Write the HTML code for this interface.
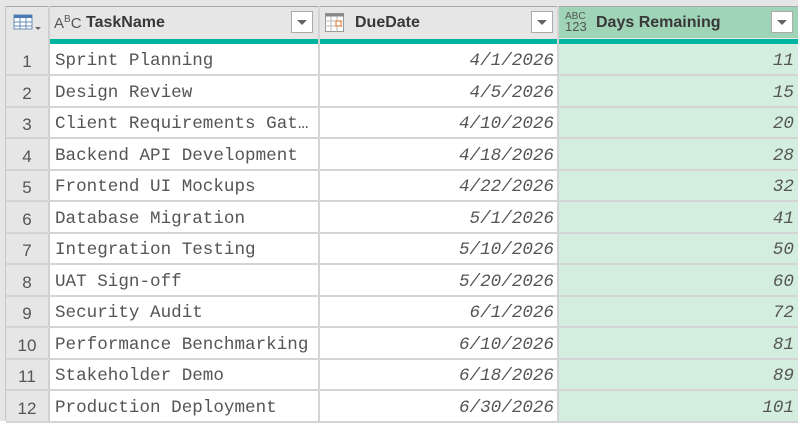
<!DOCTYPE html><html><head><style>
body{margin:0;width:798px;height:421px;overflow:hidden;background:#fff;font-family:"Liberation Sans",sans-serif;position:relative}
.a{position:absolute;box-sizing:border-box}
.h{font-weight:bold;font-size:16px;color:#383838;top:8px;height:30px;line-height:30px}
.m{font-family:"Liberation Mono",monospace;font-size:17.6px;color:#555}
.dd{width:22px;height:22px;background:#fff;border:1px solid #aaa;top:11px}
.dd:after{content:"";position:absolute;left:5px;top:8px;border-left:5px solid transparent;border-right:5px solid transparent;border-top:5px solid #666}
</style></head><body>
<div class="a" style="left:0;top:0;width:798px;height:38px;background:#e6e6e6"></div>
<div class="a" style="left:5px;top:6px;width:793px;height:1px;background:#a8a8a8"></div>
<div class="a" style="left:559px;top:7px;width:239px;height:31px;background:#9fd4b6"></div>
<div class="a" style="left:0;top:38px;width:798px;height:6px;background:#e6e6e6"></div>
<div class="a" style="left:49px;top:39px;width:749px;height:5px;background:#00b4a0"></div>
<div class="a" style="left:0;top:44px;width:49px;height:377px;background:#e6e6e6"></div>
<div class="a" style="left:559px;top:44px;width:239px;height:377px;background:#d3eedf"></div>
<div class="a" style="left:5px;top:6px;width:1px;height:415px;background:#c8c8c8"></div>
<div class="a" style="left:48px;top:6px;width:2px;height:415px;background:#d0d0d0"></div>
<div class="a" style="left:318px;top:6px;width:2px;height:415px;background:#d4d4d4"></div>
<div class="a" style="left:557px;top:6px;width:2px;height:415px;background:#d4d4d4"></div>
<svg class="a" style="left:13px;top:14px" width="32" height="20"><rect x="1" y="1" width="18" height="14" fill="#fff" stroke="#6a8cb8"/><rect x="1" y="1" width="18" height="3" fill="#4a78b5"/><path d="M1 8h18M1 12h18M7 4v11M13 4v11" stroke="#6a8cb8"/><path d="M22 13l3 3 3-3z" fill="#666"/></svg>
<div class="a" style="left:54px;top:14px;font-size:15px;color:#555">A<sup style="font-size:10px">B</sup>C</div>
<div class="a h" style="left:86px">TaskName</div>
<div class="a dd" style="left:291px"></div>
<svg class="a" style="left:324px;top:12px" width="22" height="22"><rect x="1.5" y="1.5" width="18" height="18" fill="#fff" stroke="#999"/><rect x="1.5" y="1.5" width="18" height="3" fill="#888"/><path d="M1.5 9h18M1.5 14h18M7 4.5v15M13 4.5v15" stroke="#bbb"/><rect x="12" y="9" width="5" height="5" fill="#fff" stroke="#e07020"/></svg>
<div class="a h" style="left:355px">DueDate</div>
<div class="a dd" style="left:531px"></div>
<div class="a" style="left:565px;top:12px;font-size:10px;color:#555;line-height:10px">ABC<br><span style="font-size:13px">123</span></div>
<div class="a h" style="left:596px">Days Remaining</div>
<div class="a dd" style="left:771px"></div>
<div id="rows"></div>
<script>
var d=[["Sprint Planning","4/1/2026",11],["Design Review","4/5/2026",15],["Client Requirements Gat…","4/10/2026",20],["Backend API Development","4/18/2026",28],["Frontend UI Mockups","4/22/2026",32],["Database Migration","5/1/2026",41],["Integration Testing","5/10/2026",50],["UAT Sign-off","5/20/2026",60],["Security Audit","6/1/2026",72],["Performance Benchmarking","6/10/2026",81],["Stakeholder Demo","6/18/2026",89],["Production Deployment","6/30/2026",101]];
var h="";d.forEach(function(r,i){var t=44+i*31.5,u=t+2;
h+='<div class="a" style="left:6px;top:'+(t+30)+'px;width:792px;height:2px;background:#d4d4d4"></div>';
h+='<div class="a" style="left:6px;top:'+u+'px;width:42px;height:31px;line-height:31px;text-align:center;font-size:17px;color:#555">'+(i+1)+'</div>';
h+='<div class="a m" style="left:55px;top:'+u+'px;height:31px;line-height:31px;white-space:nowrap">'+r[0]+'</div>';
h+='<div class="a m" style="left:320px;width:234px;text-align:right;top:'+u+'px;line-height:31px;font-style:italic">'+r[1]+'</div>';
h+='<div class="a m" style="left:560px;width:234px;text-align:right;top:'+u+'px;line-height:31px;font-style:italic">'+r[2]+'</div>';});
document.getElementById("rows").innerHTML=h;
</script>
</body></html>
